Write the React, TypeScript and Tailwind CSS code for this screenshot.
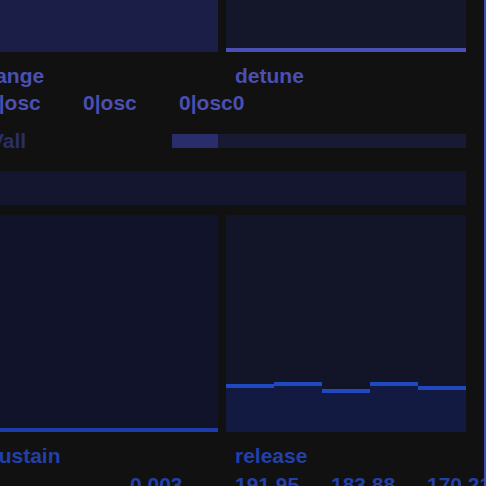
import React from "react";

const font = { fontFamily: '"Liberation Sans", Arial, sans-serif' };

const bars = [
  { h: "h-[48px]" },
  { h: "h-[50px]" },
  { h: "h-[43px]" },
  { h: "h-[50px]" },
  { h: "h-[46px]" },
];

const App = () => {
  return (
    <div
      className="w-[486px] h-[486px] overflow-hidden bg-[#111111] flex items-start font-bold text-[21px] leading-[24px]"
      style={font}
    >
      <div className="ml-[-22px] w-[488px] shrink-0 flex flex-col">
        {/* top sliders */}
        <div className="grid grid-cols-[240px_240px] gap-2 h-[52px] shrink-0">
          <div className="bg-[#1b1e46]" />
          <div className="bg-[#14162a] flex flex-col justify-end">
            <div className="h-[4px] bg-[#4b50b6]" />
          </div>
        </div>

        {/* labels */}
        <div className="grid grid-cols-[240px_240px] gap-2 mt-[12px] h-[24px] shrink-0 text-[#4a4fb3]">
          <div className="pl-[9px]">range</div>
          <div className="pl-[9px]">detune</div>
        </div>

        {/* values */}
        <div className="flex mt-[3px] h-[24px] shrink-0 pl-[9px] text-[#4a4fb3]">
          <div className="w-[96px]">0|osc</div>
          <div className="w-[96px]">0|osc</div>
          <div className="w-[96px]">0|osc0</div>
        </div>

        {/* all row */}
        <div className="flex items-center mt-[14px] h-[24px] shrink-0 w-[488px]">
          <div className="w-[194px] pl-[12px] text-[#2b2e64]">Vall</div>
          <div className="flex-1 h-[14px] bg-[#181a33] flex">
            <div className="w-[46px] bg-[#2a2d6b]" />
          </div>
        </div>

        {/* wide empty slider */}
        <div className="mt-[18px] h-[34px] shrink-0 w-[488px] bg-[#14162f]" />

        {/* envelope sliders */}
        <div className="grid grid-cols-[240px_240px] gap-2 mt-[10px] h-[217px] shrink-0">
          <div className="bg-[#11132a] flex flex-col justify-end">
            <div className="h-[4px] bg-[#1e3dac]" />
          </div>
          <div className="bg-[#121427] flex items-end">
            {bars.map((b, i) => (
              <div key={i} className={`w-[48px] ${b.h} bg-[#121a42] border-t-4 border-[#2048c0]`} />
            ))}
          </div>
        </div>

        <div className="grid grid-cols-[240px_240px] gap-2 mt-[12px] h-[24px] shrink-0 text-[#2140aa]">
          <div className="pl-[9px]">sustain</div>
          <div className="pl-[9px]">release</div>
        </div>

        <div className="grid grid-cols-[240px_240px] gap-2 mt-[5px] h-[24px] shrink-0 text-[#2140aa]">
          <div className="pl-[152px]">0.003</div>
          <div className="pl-[9px] flex">
            <div className="w-[96px] shrink-0">191.95</div>
            <div className="w-[96px] shrink-0">183.88</div>
            <div className="w-[96px] shrink-0">170.21</div>
          </div>
        </div>
      </div>
      <div className="ml-auto w-[2px] h-full bg-[#3a50b0]" />
    </div>
  );
};

export default App;
